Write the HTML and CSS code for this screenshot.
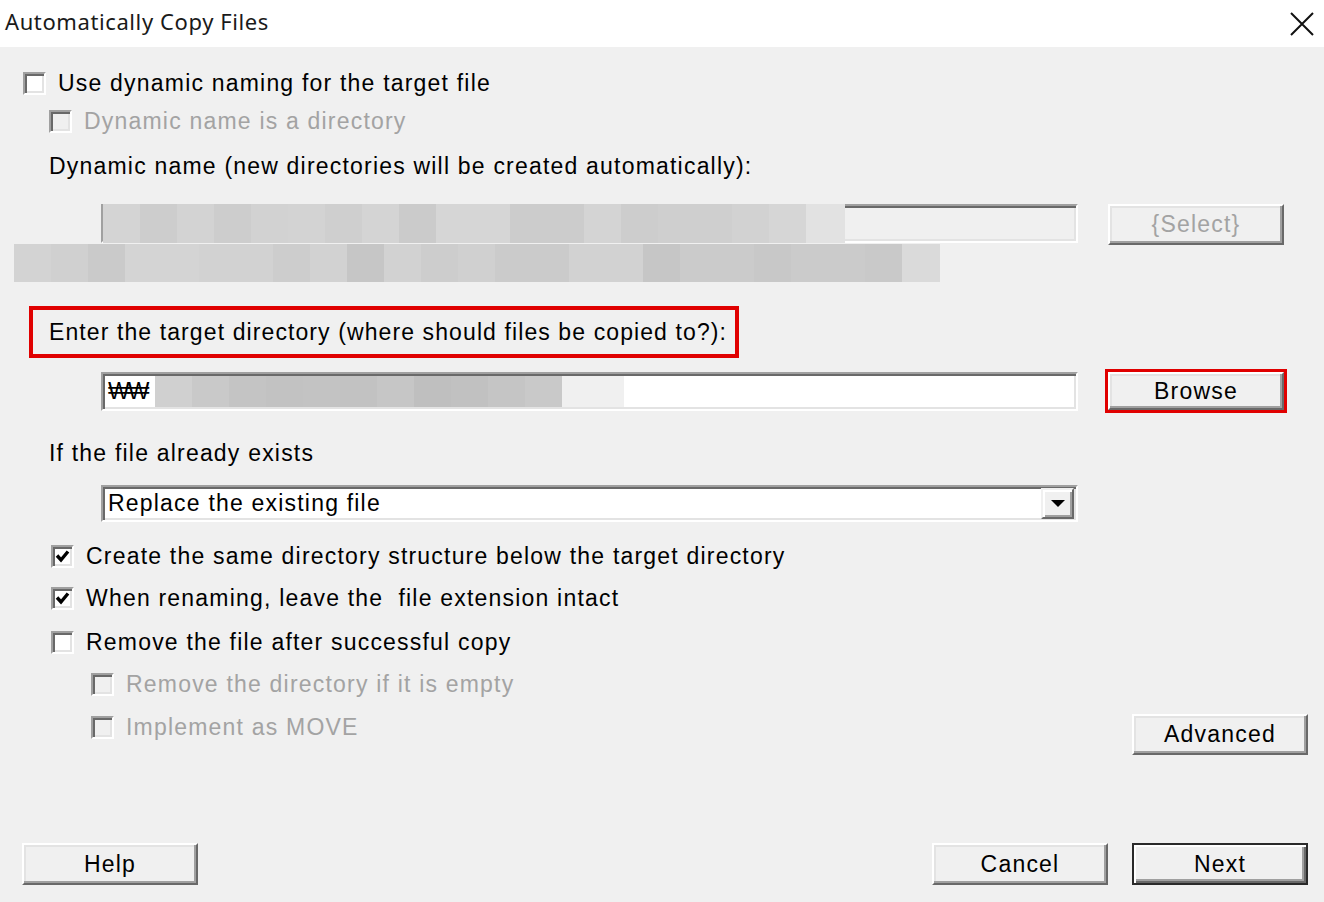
FILE: index.html
```html
<!DOCTYPE html>
<html lang="en">
<head>
    <meta charset="UTF-8">
    <title>Automatically Copy Files</title>
    <link rel="stylesheet" href="styles.css">
</head>
<body>
    <!-- 标题栏 -->
    <div class="titlebar">
        <span class="title">Automatically Copy Files</span>
        <svg class="close" viewBox="0 0 24 24">
            <path d="M1 1 L23 23 M23 1 L1 23" stroke="#111" stroke-width="2" fill="none"/>
        </svg>
    </div>

    <div class="dialog">
        <div class="check ind0 r1">
            <span class="cb"></span>
            <span class="lbl">Use dynamic naming for the target file</span>
        </div>
        <div class="check ind1 r2">
            <span class="cb off"></span>
            <span class="lbl off">Dynamic name is a directory</span>
        </div>
        <div class="text ind1 r3">Dynamic name (new directories will be created automatically):</div>

        <div class="field-row r4">
            <div class="edit disabled">
                <div class="mosaic m1"></div>
            </div>
            <div class="btn off">{Select}</div>
        </div>
        <div class="mosaic m2"></div>

        <!-- 红框标注 -->
        <div class="mark-label r6">Enter the target directory (where should files be copied to?):</div>

        <div class="field-row r7">
            <div class="edit">
                <span class="path">₩₩</span>
                <span class="mosaic m3"></span>
            </div>
            <div class="mark-btn">
                <div class="btn short">Browse</div>
            </div>
        </div>

        <div class="text ind1 r8">If the file already exists</div>

        <div class="combo r9">
            <span>Replace the existing file</span>
            <span class="drop"><i class="arrow"></i></span>
        </div>

        <div class="check ind1b r10">
            <span class="cb"><svg viewBox="0 0 19 19"><path d="M4 8.5 L8 13 L15 4.5" stroke="#000" stroke-width="3.4" fill="none"/></svg></span>
            <span class="lbl">Create the same directory structure below the target directory</span>
        </div>
        <div class="check ind1b r11">
            <span class="cb"><svg viewBox="0 0 19 19"><path d="M4 8.5 L8 13 L15 4.5" stroke="#000" stroke-width="3.4" fill="none"/></svg></span>
            <span class="lbl">When renaming, leave the &nbsp;file extension intact</span>
        </div>
        <div class="check ind1b r12">
            <span class="cb"></span>
            <span class="lbl">Remove the file after successful copy</span>
        </div>
        <div class="check ind2 r13">
            <span class="cb off"></span>
            <span class="lbl off">Remove the directory if it is empty</span>
        </div>
        <div class="last-row">
            <div class="check ind2 pt2">
                <span class="cb off"></span>
                <span class="lbl off">Implement as MOVE</span>
            </div>
            <div class="btn">Advanced</div>
        </div>

        <!-- 底部按钮 -->
        <div class="footer">
            <div class="btn tall">Help</div>
            <div class="spacer"></div>
            <div class="btn tall">Cancel</div>
            <div class="btn tall default">Next</div>
        </div>
    </div>
</body>
</html>
```

FILE: styles.css
```css
*{
    margin: 0;
    padding: 0;
    box-sizing: border-box;
}
body{
    width: 1324px;
    height: 902px;
    overflow: hidden;
    background-color: #f0f0f0;
    font-family: "Liberation Sans", Arial, sans-serif;
    font-size: 23px;
    letter-spacing: 1.2px;
    color: #000;
    display: flex;
    flex-direction: column;
}

/* 标题栏 */
.titlebar{
    height: 47px;
    background-color: #fff;
    display: flex;
    align-items: center;
    justify-content: space-between;
    padding: 0 10px 5px 5px;
}
.title{
    font-family: "Noto Sans", sans-serif;
    font-size: 22px;
    letter-spacing: 0.6px;
    color: #1a1a1a;
}
.close{
    width: 24px;
    height: 24px;
    margin-top: 5px;
}

.dialog{
    flex: 1;
    display: flex;
    flex-direction: column;
    padding-top: 25px;
}

/* 复选框 */
.check{
    display: flex;
    align-items: center;
    gap: 12px;
    height: 23px;
    white-space: pre;
}
.cb{
    flex: none;
    width: 23px;
    height: 23px;
    background-color: #fff;
    border: 2px solid;
    border-color: #a0a0a0 #fff #fff #a0a0a0;
    box-shadow: inset 2px 2px 0 #696969, inset -2px -2px 0 #e3e3e3;
}
.cb svg{
    display: block;
    width: 19px;
    height: 19px;
}
.cb.off{
    background-color: #f0f0f0;
}
.lbl.off{
    color: #a3a3a3;
}

.ind0{ padding-left: 23px; }
.ind1{ padding-left: 49px; }
.ind1b{ padding-left: 51px; }
.ind2{ padding-left: 91px; }

.text{
    height: 26px;
    line-height: 26px;
}

/* 行间距 */
.r2{ margin-top: 15px; }
.r3{ margin-top: 20px; }
.r4{ margin-top: 25px; }
.r6{ margin-top: 24px; }
.r7{ margin-top: 11px; }
.r8{ margin-top: 27px; }
.r9{ margin-top: 19px; }
.r10{ margin-top: 23px; }
.r11{ margin-top: 19px; }
.r12{ margin-top: 21px; }
.r13{ margin-top: 19px; }

/* 输入框 */
.field-row{
    display: flex;
    align-items: center;
    padding-left: 101px;
}
.r4{
    align-items: flex-start;
    gap: 30px;
}
.r7{
    gap: 27px;
}
.edit{
    position: relative;
    width: 977px;
    height: 39px;
    background-color: #fff;
    border: 2px solid;
    border-color: #a0a0a0 #fff #fff #a0a0a0;
    box-shadow: inset 2px 2px 0 #696969, inset -2px -2px 0 #e3e3e3;
    display: flex;
    align-items: center;
    padding-left: 5px;
}
.edit.disabled{
    background-color: #f0f0f0;
}
.path{
    display: inline-block;
    width: 47px;
    letter-spacing: -2px;
}

/* 打码区域 */
.mosaic{
    display: block;
}
.m1{
    position: absolute;
    left: 0;
    top: -2px;
    width: 742px;
    height: 39px;
    background: linear-gradient(90deg,
        #d4d4d4 0 37px, #cdcdcd 37px 74px, #d3d3d3 74px 111px, #cdcdcd 111px 148px,
        #d2d2d2 148px 185px, #d3d3d3 185px 222px, #cfcfcf 222px 259px, #d4d4d4 259px 296px,
        #cbcbcb 296px 333px, #d6d6d6 333px 370px, #d6d6d6 370px 407px, #cccccc 407px 444px,
        #cccccc 444px 481px, #d4d4d4 481px 518px, #cdcdcd 518px 555px, #cfcfcf 555px 592px,
        #cfcfcf 592px 629px, #d2d2d2 629px 666px, #d6d6d6 666px 703px, #e2e2e2 703px 742px);
}
.m2{
    margin-top: -1px;
    margin-left: 14px;
    width: 926px;
    height: 38px;
    background: linear-gradient(90deg,
        #d3d3d3 0 37px, #d0d0d0 37px 74px, #cacaca 74px 111px, #d4d4d4 111px 148px,
        #d4d4d4 148px 185px, #d2d2d2 185px 222px, #d2d2d2 222px 259px, #cdcdcd 259px 296px,
        #d2d2d2 296px 333px, #c6c6c6 333px 370px, #d2d2d2 370px 407px, #cdcdcd 407px 444px,
        #d0d0d0 444px 481px, #cbcbcb 481px 518px, #cbcbcb 518px 555px, #d2d2d2 555px 592px,
        #d2d2d2 592px 629px, #c6c6c6 629px 666px, #cbcbcb 666px 703px, #cbcbcb 703px 740px,
        #c8c8c8 740px 777px, #cbcbcb 777px 814px, #cbcbcb 814px 851px, #c9c9c9 851px 888px,
        #dadada 888px 926px);
}
.m3{
    width: 469px;
    height: 31px;
    background: linear-gradient(90deg,
        #d0d0d0 0 37px, #c9c9c9 37px 74px, #c4c4c4 74px 111px, #c2c2c2 111px 148px,
        #c3c3c3 148px 185px, #c2c2c2 185px 222px, #c6c6c6 222px 259px, #bfbfbf 259px 296px,
        #c1c1c1 296px 333px, #c5c5c5 333px 370px, #c9c9c9 370px 407px, #f0f0f0 407px 469px);
}

/* 红框 */
.mark-label{
    margin-left: 29px;
    width: 710px;
    height: 52px;
    border: 4px solid #e00000;
    padding-left: 16px;
    line-height: 44px;
    white-space: nowrap;
    letter-spacing: 1.1px;
}
.mark-btn{
    width: 182px;
    height: 44px;
    border: 3px solid #e00000;
}

/* 下拉框 */
.combo{
    margin-left: 101px;
    width: 977px;
    height: 37px;
    background-color: #fff;
    border: 2px solid;
    border-color: #a0a0a0 #fff #fff #a0a0a0;
    box-shadow: inset 2px 2px 0 #696969, inset -2px -2px 0 #e3e3e3;
    display: flex;
    align-items: center;
    justify-content: space-between;
    padding: 2px 2px 2px 5px;
}
.drop{
    width: 33px;
    height: 31px;
    background-color: #f0f0f0;
    border: 2px solid;
    border-color: #f0f0f0 #696969 #696969 #f0f0f0;
    box-shadow: inset 2px 2px 0 #fff, inset -2px -2px 0 #a0a0a0;
    display: flex;
    align-items: center;
    justify-content: center;
}
.arrow{
    width: 0;
    height: 0;
    border-left: 7px solid transparent;
    border-right: 7px solid transparent;
    border-top: 7px solid #000;
}

/* 按钮 */
.btn{
    flex: none;
    width: 176px;
    height: 41px;
    background-color: #f0f0f0;
    border: 2px solid;
    border-color: #fff #696969 #696969 #fff;
    box-shadow: inset -2px -2px 0 #a0a0a0, inset 2px 2px 0 #e3e3e3;
    display: flex;
    align-items: center;
    justify-content: center;
}
.btn.off{
    color: #a3a3a3;
}
.btn.short{
    height: 38px;
}
.btn.tall{
    height: 42px;
}
.btn.default{
    border-color: #2a2a2a;
    box-shadow: inset 2px 2px 0 #fff, inset -2px -2px 0 #696969, inset -4px -4px 0 #a0a0a0;
}

.last-row{
    margin-top: 18px;
    display: flex;
    align-items: flex-start;
    justify-content: space-between;
    padding-right: 16px;
}
.pt2{
    margin-top: 2px;
}

.footer{
    margin-top: auto;
    display: flex;
    gap: 24px;
    padding: 0 16px 17px 22px;
}
.spacer{
    flex: 1;
}
```
